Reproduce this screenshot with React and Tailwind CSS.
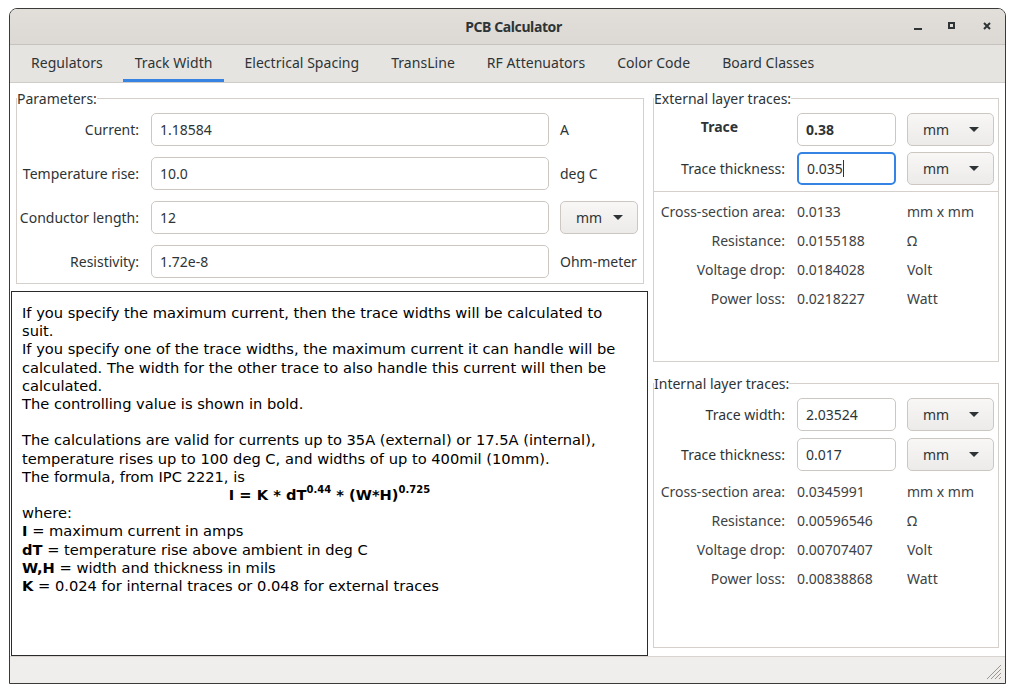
import React from 'react';

function Field({ value, width, bold, focused }) {
  return (
    <div
      className={
        'h-[33px] rounded-[5px] bg-white flex items-center px-[8px] text-[14px] ' +
        (focused ? 'border-2 border-[#3584e4] px-[7px]' : 'border border-[#cdc7c2]') +
        (bold ? ' font-bold' : '')
      }
      style={{ width }}
    >
      {value}
      {focused && <span className="w-px h-[17px] bg-[#2e3436]" />}
    </div>
  );
}

function Combo({ width }) {
  return (
    <div
      className="h-[33px] rounded-[5px] border border-[#cdc7c2] bg-gradient-to-b from-[#f8f7f6] to-[#edebe9] flex items-center justify-between pl-[15px] pr-[14px] text-[14px]"
      style={{ width }}
    >
      <span>mm</span>
      <svg width="10" height="5" viewBox="0 0 10 5">
        <path d="M0 0 L10 0 L5 5 Z" fill="#2e3436" />
      </svg>
    </div>
  );
}

function Group({ title, className, children }) {
  return (
    <fieldset className={'border border-[#d5d0cc] ' + className}>
      <legend className="text-[14px] leading-[19px] text-[#2e3436]">{title}</legend>
      {children}
    </fieldset>
  );
}

function ParamRow({ label, value, unit, combo }) {
  return (
    <div className="flex items-center h-[33px]">
      <div className="w-[122px] text-right text-[14px]">{label}</div>
      <div className="ml-[12px]">
        <Field value={value} width={398} />
      </div>
      <div className="ml-[11px] text-[14px]">{combo ? <Combo width={78} /> : unit}</div>
    </div>
  );
}

function TraceRow({ label, value, center, bold, focused }) {
  return (
    <div className="flex items-center h-[33px]">
      <div className={'w-[131px] text-[14px] ' + (center ? 'text-center font-bold -mt-[6px]' : 'text-right')}>
        {label}
      </div>
      <div className="ml-[12px]">
        <Field value={value} width={99} bold={bold} focused={focused} />
      </div>
      <div className="ml-[11px]">
        <Combo width={87} />
      </div>
    </div>
  );
}

function ResultRows({ rows }) {
  return (
    <div>
      {rows.map(([label, value, unit]) => (
        <div key={label} className="flex items-center h-[29px] text-[14px] text-[#3d4245]">
          <div className="w-[131px] text-right whitespace-nowrap">{label}</div>
          <div className="ml-[12px] w-[110px]">{value}</div>
          <div>{unit}</div>
        </div>
      ))}
    </div>
  );
}

const tabs = ['Regulators', 'Track Width', 'Electrical Spacing', 'TransLine', 'RF Attenuators', 'Color Code', 'Board Classes'];

export default function App() {
  return (
    <div className="w-[1015px] h-[691px] bg-white pt-[8px] pl-[9px] font-['Noto_Sans',sans-serif] text-[#2e3436]">
      <div className="w-[997px] h-[676px] border border-[#3a3a3a] rounded-t-[8px] overflow-hidden flex flex-col">
        {/* Title bar */}
        <div className="h-[36px] shrink-0 bg-gradient-to-b from-[#e2dfdb] to-[#dcd9d5] border-b border-[#c6c2bd] flex items-center relative">
          <div className="flex-1 text-center pl-[12px] font-bold text-[14px] tracking-[-0.4px]">PCB Calculator</div>
          <div className="absolute right-[14px] top-[13px] flex items-start">
            <div className="w-[8px] h-[2px] mt-[6px] bg-[#2e3436]" />
            <div className="ml-[26px] w-[7px] h-[7px] border-2 border-[#2e3436]" />
            <svg className="ml-[28px]" width="8" height="8" viewBox="0 0 8 8">
              <path d="M1 1 L7 7 M7 1 L1 7" stroke="#2e3436" strokeWidth="2" />
            </svg>
          </div>
        </div>

        {/* Tabs */}
        <div className="h-[38px] shrink-0 bg-[#e6e4e1] border-b border-[#d0ccc7] flex pl-[5px]">
          {tabs.map((t) => (
            <div
              key={t}
              className={
                'mx-[4px] px-[12px] pt-[1px] flex items-center text-[14px] tracking-[0.04px] border-b-[3px] ' +
                (t === 'Track Width' ? 'border-[#3584e4]' : 'border-transparent')
              }
            >
              {t}
            </div>
          ))}
        </div>

        {/* Content */}
        <div className="flex-1 flex bg-white">
          <div className="w-[638px] flex flex-col">
            <Group title="Parameters:" className="ml-[6px] mt-[6px] w-[628px] px-0 pt-[5px] pb-[5px]">
              <div className="flex flex-col gap-[11px]">
                <ParamRow label="Current:" value="1.18584" unit="A" />
                <ParamRow label="Temperature rise:" value="10.0" unit="deg C" />
                <ParamRow label="Conductor length:" value="12" combo />
                <ParamRow label="Resistivity:" value="1.72e-8" unit="Ohm-meter" />
              </div>
            </Group>

            <div className="ml-[1px] mt-[7px] w-[637px] flex-1 border border-[#2b2b2b] bg-white pl-[10px] pt-[12px] font-['DejaVu_Sans',sans-serif] text-[14.67px] leading-[18.2px] text-black whitespace-nowrap">
              <div>If you specify the maximum current, then the trace widths will be calculated to</div>
              <div>suit.</div>
              <div>If you specify one of the trace widths, the maximum current it can handle will be</div>
              <div>calculated. The width for the other trace to also handle this current will then be</div>
              <div>calculated.</div>
              <div>The controlling value is shown in bold.</div>
              <div>&nbsp;</div>
              <div>The calculations are valid for currents up to 35A (external) or 17.5A (internal),</div>
              <div>temperature rises up to 100 deg C, and widths of up to 400mil (10mm).</div>
              <div>The formula, from IPC 2221, is</div>
              <div className="h-[18.2px] text-center font-bold pr-[10px]">
                I = K * dT<sup className="text-[10px] relative -top-[7px]">0.44</sup> * (W*H)
                <sup className="text-[10px] relative -top-[7px]">0.725</sup>
              </div>
              <div>where:</div>
              <div><b>I</b> = maximum current in amps</div>
              <div><b>dT</b> = temperature rise above ambient in deg C</div>
              <div><b>W,H</b> = width and thickness in mils</div>
              <div><b>K</b> = 0.024 for internal traces or 0.048 for external traces</div>
            </div>
          </div>

          <div className="flex-1 pl-[5px] flex flex-col">
            <Group title="External layer traces:" className="mt-[6px] w-[346px] pt-[5px] pb-[48px]">
              <TraceRow label="Trace" value="0.38" center bold />
              <div className="mt-[6px]">
                <TraceRow label="Trace thickness:" value="0.035" focused />
              </div>
              <div className="mt-[6px] mb-[5px] h-px bg-[#d5d0cc]" />
              <ResultRows
                rows={[
                  ['Cross-section area:', '0.0133', 'mm x mm'],
                  ['Resistance:', '0.0155188', 'Ω'],
                  ['Voltage drop:', '0.0184028', 'Volt'],
                  ['Power loss:', '0.0218227', 'Watt'],
                ]}
              />
            </Group>

            <Group title="Internal layer traces:" className="mt-[12px] w-[346px] pt-[5px] pb-[54px]">
              <TraceRow label="Trace width:" value="2.03524" />
              <div className="mt-[7px]">
                <TraceRow label="Trace thickness:" value="0.017" />
              </div>
              <div className="mt-[6px]">
                <ResultRows
                  rows={[
                    ['Cross-section area:', '0.0345991', 'mm x mm'],
                    ['Resistance:', '0.00596546', 'Ω'],
                    ['Voltage drop:', '0.00707407', 'Volt'],
                    ['Power loss:', '0.00838868', 'Watt'],
                  ]}
                />
              </div>
            </Group>
          </div>
        </div>

        {/* Status bar */}
        <div className="h-[27px] shrink-0 bg-[#f0eeec] border-t border-[#d8d4d0] flex justify-end items-end pr-[3px] pb-[3px]">
          <svg width="18" height="18" viewBox="0 0 18 18">
            <path d="M17 3 L3 17 M17 7 L7 17 M17 11 L11 17 M17 15 L15 17" stroke="#9a968f" strokeWidth="1" />
          </svg>
        </div>
      </div>
    </div>
  );
}
